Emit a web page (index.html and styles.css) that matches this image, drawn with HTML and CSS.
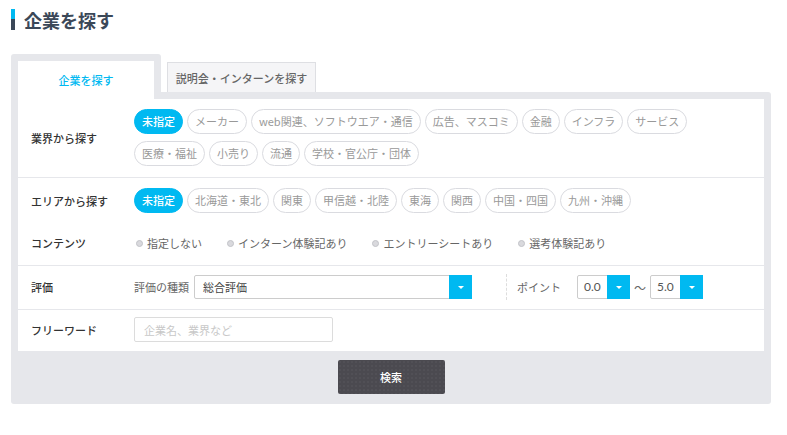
FILE: index.html
```html
<!DOCTYPE html>
<html lang="ja">
<head>
    <meta charset="UTF-8">
    <title>企業を探す</title>
    <link rel="stylesheet" href="styles.css">
</head>
<body>

<div class="page">
    <h1 class="title"><span class="title-bar"></span>企業を探す</h1>

    <div class="search">
        <!-- tabs -->
        <div class="tabs">
            <div class="tab-active"><div class="tab-inner">企業を探す</div></div>
            <div class="tab">説明会・インターンを探す</div>
        </div>

        <div class="frame">
            <div class="panel">

                <div class="row row-industry">
                    <div class="label">業界から探す</div>
                    <div class="tags tags-wide">
                        <span class="tag active">未指定</span>
                        <span class="tag">メーカー</span>
                        <span class="tag">web関連、ソフトウエア・通信</span>
                        <span class="tag">広告、マスコミ</span>
                        <span class="tag">金融</span>
                        <span class="tag">インフラ</span>
                        <span class="tag">サービス</span>
                        <span class="tag">医療・福祉</span>
                        <span class="tag">小売り</span>
                        <span class="tag">流通</span>
                        <span class="tag">学校・官公庁・団体</span>
                    </div>
                </div>

                <div class="row-group">
                    <div class="row row-area">
                        <div class="label">エリアから探す</div>
                        <div class="tags">
                            <span class="tag active">未指定</span>
                            <span class="tag">北海道・東北</span>
                            <span class="tag">関東</span>
                            <span class="tag">甲信越・北陸</span>
                            <span class="tag">東海</span>
                            <span class="tag">関西</span>
                            <span class="tag">中国・四国</span>
                            <span class="tag">九州・沖縄</span>
                        </div>
                    </div>
                    <div class="row row-contents">
                        <div class="label">コンテンツ</div>
                        <div class="radios">
                            <label class="radio"><span class="dot"></span>指定しない</label>
                            <label class="radio"><span class="dot"></span>インターン体験記あり</label>
                            <label class="radio"><span class="dot"></span>エントリーシートあり</label>
                            <label class="radio"><span class="dot"></span>選考体験記あり</label>
                        </div>
                    </div>
                </div>

                <div class="row row-rating">
                    <div class="label">評価</div>
                    <div class="rating">
                        <span class="sub-label">評価の種類</span>
                        <div class="select select-type">
                            <span class="select-value">総合評価</span>
                            <span class="select-arrow"></span>
                        </div>
                        <div class="point">
                            <span class="sub-label">ポイント</span>
                            <div class="select select-point">
                                <span class="select-value num">0.0</span>
                                <span class="select-arrow"></span>
                            </div>
                            <span class="tilde">〜</span>
                            <div class="select select-point">
                                <span class="select-value num">5.0</span>
                                <span class="select-arrow"></span>
                            </div>
                        </div>
                    </div>
                </div>

                <div class="row row-word">
                    <div class="label">フリーワード</div>
                    <input class="word-input" type="text" placeholder="企業名、業界など">
                </div>

            </div>

            <div class="actions">
                <button class="search-btn">検索</button>
            </div>
        </div>
    </div>
</div>

</body>
</html>
```

FILE: styles.css
```css
/* base */
body {
    margin: 0;
    background: #fff;
    color: #333;
    font-family: "Noto Sans CJK JP", "Noto Sans", sans-serif;
}
.page {
    padding: 9px 0 0 11px;
}
.title {
    display: flex;
    align-items: center;
    gap: 9px;
    margin: 0;
    height: 21px;
    font-size: 18px;
    font-weight: 700;
    color: #3b4858;
}
.title-bar {
    width: 4px;
    height: 21px;
    background: linear-gradient(#00b9f1 0, #00b9f1 50%, #3b4858 50%, #3b4858 100%);
}

/* tabs */
.search {
    width: 760px;
    margin-top: 24px;
}
.tabs {
    display: flex;
    align-items: flex-end;
    gap: 6px;
    height: 38px;
}
.tab-active {
    position: relative;
    z-index: 1;
    align-self: flex-start;
    width: 150px;
    box-sizing: border-box;
    padding: 7px 7px 0;
    background: #e6e7eb;
    border-radius: 3px 3px 0 0;
}
.tab-inner {
    height: 38px;
    display: flex;
    align-items: center;
    justify-content: center;
    background: #fff;
    color: #00b9f1;
    font-size: 11px;
    font-weight: 500;
}
.tab {
    width: 149px;
    height: 30px;
    box-sizing: border-box;
    display: flex;
    align-items: center;
    justify-content: center;
    background: #f5f5f7;
    border: 1px solid #dedfe3;
    border-bottom: none;
    color: #666;
    font-size: 11px;
    font-weight: 500;
}

/* frame & panel */
.frame {
    background: #e6e7eb;
    padding: 7px 7px 10px;
    border-radius: 0 3px 3px 3px;
}
.panel {
    background: #fff;
}
.row {
    display: flex;
    align-items: center;
}
.row-industry, .row-group, .row-rating {
    border-bottom: 1px solid #e6e7eb;
}
.label {
    width: 103px;
    flex-shrink: 0;
    padding-left: 13px;
    font-size: 11px;
    font-weight: 500;
    color: #333;
}
.row-industry {
    padding: 10px 0 11px;
}
.row-area {
    padding-top: 10px;
}
.row-contents {
    padding: 20px 0 12px;
    height: 20px;
}
.row-rating {
    padding: 8px 0 9px;
}
.row-word {
    padding: 7px 0 9px;
}

/* tags */
.tags {
    display: flex;
    flex-wrap: wrap;
    gap: 7px 4px;
}
.tags-wide {
    padding-right: 60px;
}
.tag {
    height: 25px;
    line-height: 23px;
    box-sizing: border-box;
    padding: 0 7px;
    border: 1px solid #dadbe0;
    border-radius: 13px;
    font-size: 11px;
    color: #999;
    white-space: nowrap;
}
.tag.active {
    background: #00b9f1;
    border-color: #00b9f1;
    color: #fff;
    font-weight: 500;
}

/* radios */
.radios {
    display: flex;
    gap: 25px;
    padding-left: 2px;
}
.radio {
    display: flex;
    align-items: center;
    gap: 4px;
    font-size: 11px;
    color: #666;
}
.dot {
    width: 7px;
    height: 7px;
    box-sizing: border-box;
    border-radius: 50%;
    background: #d9d9dd;
    border: 1px solid #c2c3c8;
}

/* rating */
.rating {
    display: flex;
    align-items: center;
}
.sub-label {
    font-size: 11px;
    color: #666;
}
.select {
    display: flex;
    height: 24px;
    box-sizing: border-box;
    border: 1px solid #ccc;
    border-radius: 2px;
    background: #fff;
}
.select-type {
    width: 278px;
    margin-left: 5px;
}
.select-value {
    flex: 1;
    padding-left: 8px;
    line-height: 22px;
    font-size: 11px;
    color: #444;
}
.select-value.num {
    padding-left: 6px;
    font-family: Lato, "Noto Sans", sans-serif;
    font-size: 12px;
    color: #555;
}
.select-arrow {
    width: 23px;
    margin: -1px -1px -1px 0;
    background: #00b9f1;
    display: flex;
    align-items: center;
    justify-content: center;
}
.select-arrow::after {
    content: "";
    border-left: 3px solid transparent;
    border-right: 3px solid transparent;
    border-top: 3px solid #fff;
}
.point {
    display: flex;
    align-items: center;
    margin-left: 34px;
    padding-left: 10px;
    border-left: 1px dashed #ddd;
    height: 26px;
}
.point .sub-label {
    margin-right: 16px;
}
.select-point {
    width: 53px;
}
.tilde {
    margin: 0 4px;
    font-size: 12px;
    color: #666;
}

/* free word */
.word-input {
    width: 199px;
    height: 25px;
    box-sizing: border-box;
    margin: 0;
    padding: 0 9px;
    border: 1px solid #dcdcdc;
    border-radius: 2px;
    font-family: inherit;
    font-size: 11px;
    color: #333;
}
.word-input::placeholder {
    color: #c8c8c8;
}

/* button */
.actions {
    display: flex;
    justify-content: center;
    padding-top: 9px;
}
.search-btn {
    width: 107px;
    height: 34px;
    border: none;
    border-radius: 2px;
    background-color: #4b4a50;
    background-image: radial-gradient(rgba(255, 255, 255, 0.08) 0.6px, transparent 0.8px);
    background-size: 4px 4px;
    color: #fff;
    font-family: inherit;
    font-size: 11px;
    font-weight: 500;
    cursor: pointer;
}
```
